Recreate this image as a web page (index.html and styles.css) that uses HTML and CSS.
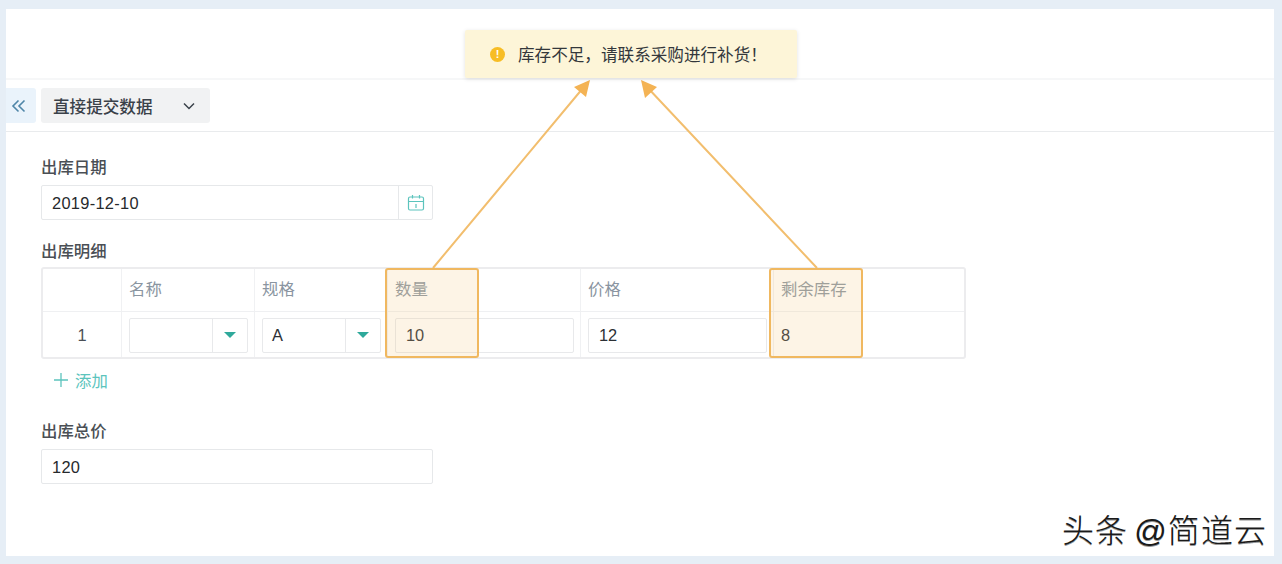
FILE: index.html
```html
<!DOCTYPE html>
<html lang="zh-CN">
<head>
<meta charset="utf-8">
<title>出库</title>
<link rel="stylesheet" href="styles.css">
</head>
<body>
<div class="frame">
  <main class="page">
    <header class="top"></header>
    <nav class="toolbar">
      <button class="collapse">
        <svg width="16" height="14" viewBox="0 0 16 14"><path d="M7.500 1.500 2 7l5.500 5.500M13.500 1.500 8 7l5.500 5.500" fill="none" stroke="#4f86a8" stroke-width="1.600"/></svg>
      </button>
      <button class="action">
        <span>直接提交数据</span>
        <svg width="14" height="10" viewBox="0 0 14 10"><path d="M2 2.500 7 7.500l5-5" fill="none" stroke="#3a4149" stroke-width="1.500"/></svg>
      </button>
    </nav>
    <section class="form">
      <label class="label first">出库日期</label>
      <div class="field">
        <span class="value">2019-12-10</span>
        <span class="cal">
          <svg width="18" height="18" viewBox="0 0 18 18" fill="none" stroke="#5cc4bd" stroke-width="1.200"><rect x="1.500" y="3" width="15" height="13" rx="1.500"/><path d="M1.500 7.500h15M5.500 1v3.500M12.500 1v3.500M9 10v4"/></svg>
        </span>
      </div>
      <label class="label second">出库明细</label>
      <div class="table">
        <div class="row head">
          <div class="cell"></div>
          <div class="cell">名称</div>
          <div class="cell">规格</div>
          <div class="cell">数量</div>
          <div class="cell">价格</div>
          <div class="cell">剩余库存</div>
        </div>
        <div class="row body">
          <div class="cell num">1</div>
          <div class="cell"><div class="select"><span class="val"></span><span class="drop"><i></i></span></div></div>
          <div class="cell"><div class="select"><span class="val">A</span><span class="drop"><i></i></span></div></div>
          <div class="cell"><div class="input">10</div></div>
          <div class="cell"><div class="input">12</div></div>
          <div class="cell plain">8</div>
        </div>
      </div>
      <div class="add">
        <svg width="16" height="16" viewBox="0 0 16 16"><path d="M8 1v14M1 8h14" stroke="#5cc4bd" stroke-width="1.300" fill="none"/></svg>
        <span>添加</span>
      </div>
      <label class="label third">出库总价</label>
      <div class="field"><span class="value">120</span></div>
    </section>
  </main>

  <svg class="arrows" width="1282" height="564" viewBox="0 0 1282 564">
    <path d="M433 268 583 88M817 268 647 87" fill="none" stroke="#f2be6e" stroke-width="2"/>
    <path d="M590 80 586 97 574 87ZM641 80 657 87 645 98Z" fill="#f4b354"/>
  </svg>
  <div class="mark mark-qty"></div>
  <div class="mark mark-stock"></div>
  <div class="toast">
    <span class="warn">!</span>
    <span>库存不足，请联系采购进行补货！</span>
  </div>
  <div class="watermark">头条 @简道云</div>
</div>
</body>
</html>
```

FILE: styles.css
```css
* { box-sizing: border-box; }
html, body { margin: 0; height: 100%; }
body {
  background: #e6eef6;
  font-family: "Liberation Sans", "Noto Sans CJK SC", sans-serif;
  color: #2f3439;
  overflow: hidden;
}
.frame { position: relative; width: 1282px; height: 564px; padding: 9px 8px 8px 6px; }
.page { background: #fff; height: 547px; display: flex; flex-direction: column; }
.top { height: 71px; border-bottom: 2px solid #f6f7f8; flex: none; }
.toolbar {
  height: 52px; flex: none; border-bottom: 1px solid #e9ebed;
  display: flex; align-items: flex-start; padding-top: 8px; gap: 5px;
}
button { border: 0; margin: 0; font: inherit; color: inherit; }
.collapse {
  width: 30px; height: 35px; background: #eaf3fb; border-radius: 0 3px 3px 0;
  display: flex; align-items: center; justify-content: center; padding: 0 4px 0 0;
}
.action {
  width: 169px; height: 35px; background: #f1f2f3; border-radius: 3px;
  display: flex; align-items: center; justify-content: space-between;
  padding: 0 14px 0 12px; font-size: 16.600px; font-weight: 500; color: #3a4149;
}
.form { padding: 0 0 0 35px; display: flex; flex-direction: column; align-items: flex-start; }
.label { font-size: 16.400px; line-height: 20px; color: #4a4f55; font-weight: 500; }
.label.first { margin-top: 25px; }
.label.second { margin-top: 21px; }
.label.third { margin-top: 29px; }
.field {
  width: 392px; height: 35px; margin-top: 8px; border: 1px solid #e6e8ea; border-radius: 2px;
  display: flex; align-items: center; justify-content: space-between; font-size: 16.400px; color: #26292c;
}
.value { padding: 2px 0 0 10px; letter-spacing: .3px; }
.cal {
  width: 34px; height: 100%; border-left: 1px solid #e6e8ea;
  display: flex; align-items: center; justify-content: center;
}
.table {
  width: 925px; height: 92px; margin-top: 6px; border: 2px solid #ececee; border-radius: 3px;
  display: flex; flex-direction: column;
}
.row { display: grid; grid-template-columns: 78px 133px 133px 193px 193px 192px; }
.row.head { height: 43px; border-bottom: 1px solid #eff0f2; font-size: 16.400px; color: #8a95a1; }
.row.body { flex: 1; font-size: 16.400px; color: #2c3035; }
.cell { border-left: 1px solid #f0f1f3; display: flex; align-items: center; padding-left: 7px; }
.row.head .cell { padding-bottom: 5px; }
.row.body .cell { padding-top: 1px; }
.cell:first-child { border-left: 0; }
.cell.num { justify-content: center; padding-left: 0; color: #4a4f55; }
.cell.plain { padding-left: 7px; }
.select, .input {
  height: 35px; border: 1px solid #e8e9eb; border-radius: 2px; display: flex; align-items: center; background: #fff;
}
.select { width: 119px; }
.input { width: 179px; padding-left: 10px; }
.val { flex: 1; padding-left: 9px; }
.drop {
  width: 35px; height: 100%; border-left: 1px solid #e8e9eb;
  display: flex; align-items: center; justify-content: center;
}
.drop i {
  width: 0; height: 0; border-left: 6px solid transparent; border-right: 6px solid transparent;
  border-top: 6px solid #2fa99b;
}
.add {
  display: flex; align-items: center; gap: 6px; height: 24px; margin-top: 9px; margin-left: 12px;
  font-size: 16.400px; color: #5cc4bd;
}
.arrows { position: absolute; left: 0; top: 0; pointer-events: none; }
.mark {
  position: absolute; top: 268px; height: 90px; width: 94px;
  border: 2px solid #f0b860; border-radius: 3px; background: rgba(247, 200, 130, .2);
}
.mark-qty { left: 385px; }
.mark-stock { left: 769px; }
.toast {
  position: absolute; left: 465px; top: 30px; width: 332px; height: 48px;
  background: #fdf5d8; border-radius: 2px; box-shadow: 0 1px 4px rgba(0, 0, 0, .12);
  display: flex; align-items: center; padding-left: 25px; gap: 13px; font-size: 16.600px; color: #33373b;
}
.warn {
  width: 15px; height: 15px; border-radius: 50%; background: #f7bd25; color: #fff;
  font-size: 11px; font-weight: bold; line-height: 15px; text-align: center; flex: none;
}
.watermark {
  position: absolute; left: 1062px; top: 512px; font-size: 32px; line-height: 38px; color: #1a1a1a;
  letter-spacing: 1.100px; word-spacing: -4px; white-space: nowrap; font-weight: 300;
  text-shadow: 0 1px 0 #999;
}
```
